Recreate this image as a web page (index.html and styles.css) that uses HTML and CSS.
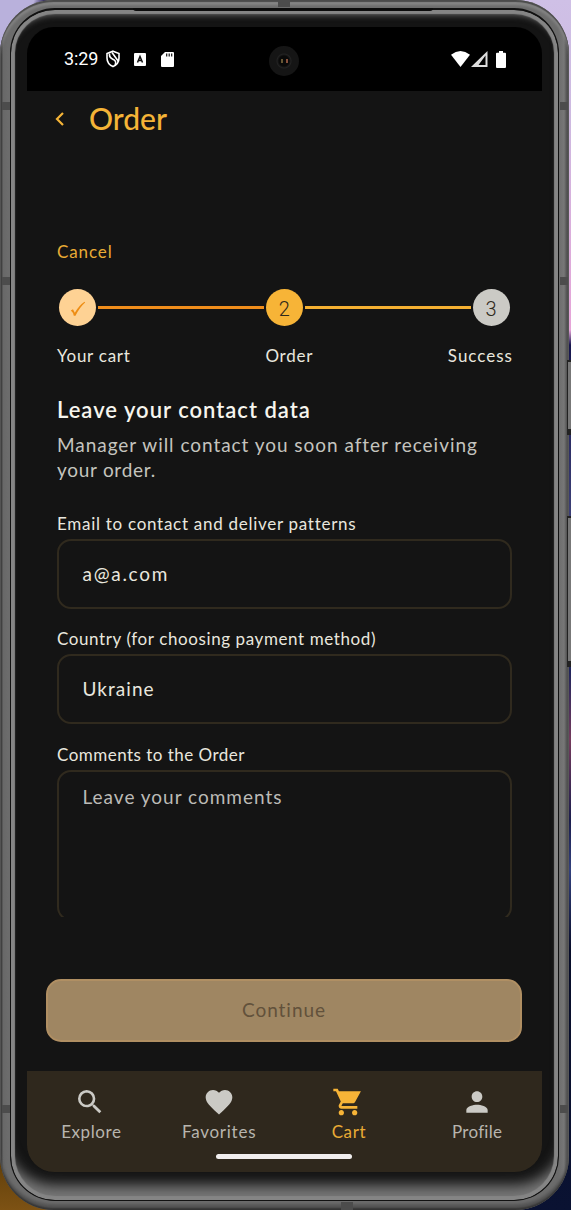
FILE: index.html
```
<!DOCTYPE html>
<html lang="en">
<head>
<meta charset="utf-8">
<title>Order</title>
<link rel="stylesheet" href="styles.css">
</head>
<body>
<div class="phone">
  <div class="bezel">
    <main class="screen">
      <div class="status">
        <span class="time">3:29</span>
        <svg class="s-shield" width="16" height="18" viewBox="0 0 16 18" fill="none" stroke="#fff" stroke-width="1.600"><path d="M8 1.200 14 3.500V8c0 4-2.500 7-6 8.600C4.500 15 2 12 2 8V3.500z"/><path d="M4.500 3.500C4 8 6.500 8.500 8.500 9.500s3 3 1.500 5.500M7 2.500l6.500 9"/></svg>
        <svg class="s-a" width="12" height="13" viewBox="0 0 12 13"><rect width="12" height="13" rx="1" fill="#fff"/><path d="M3.500 9.500 6 3.500l2.500 6M4.500 7.500h3" fill="none" stroke="#111" stroke-width="1.500"/></svg>
        <svg class="s-sd" width="13" height="15" viewBox="0 0 13 15"><path d="M4 0h8q1 0 1 1v13q0 1-1 1H1q-1 0-1-1V4z" fill="#fff"/><path d="M5.700 1.500v3M8.200 1.500v3M10.700 1.500v3" stroke="#111" stroke-width="1.200"/></svg>
        <span class="camera"><i></i><i></i></span>
        <svg class="s-wifi" width="19" height="16" viewBox="0 0 19 16"><path d="M0 3.700Q9.500-3.500 19 3.700L9.500 16z" fill="#fff"/></svg>
        <svg class="s-cell" width="17" height="16" viewBox="0 0 17 16"><path d="M0 16 16.500 0v16zM7.500 14h7V4.500z" fill="#ddd" fill-rule="evenodd"/></svg>
        <svg class="s-bat" width="10" height="17" viewBox="0 0 10 17"><path d="M3 0h4v1.700h2q1 0 1 1V16q0 1-1 1H1q-1 0-1-1V2.700q0-1 1-1h2z" fill="#fff"/></svg>
      </div>
      <header class="header">
        <svg width="10" height="14" viewBox="0 0 10 14" fill="none" stroke="#f5b437" stroke-width="2.200"><path d="M8 1 2 7l6 6"/></svg>
        <h1>Order</h1>
      </header>
      <section class="content">
        <a class="cancel">Cancel</a>
        <div class="steps">
          <span class="dot done"><svg width="16" height="16" viewBox="0 0 16 16"><path d="M.8 9.500 3 8.300l1.800 3.500Q9 4.500 14.500.8l.6.700Q9.500 6.500 5.500 14.800H3.800Q3 11 .8 9.500z" fill="#ee8d14"/></svg></span>
          <span class="line first"></span>
          <span class="dot current">2</span>
          <span class="line"></span>
          <span class="dot next">3</span>
        </div>
        <div class="step-names"><span class="n1">Your cart</span><span class="n2">Order</span><span class="n3">Success</span></div>
        <h2>Leave your contact data</h2>
        <p class="note"><span class="p1">Manager will contact you soon after receiving</span><br><span class="p2">your order.</span></p>
        <label class="l1">Email to contact and deliver patterns</label>
        <div class="field f1">a@a.com</div>
        <label class="l2">Country (for choosing payment method)</label>
        <div class="field f2">Ukraine</div>
        <label class="l3">Comments to the Order</label>
        <div class="field area">Leave your comments</div>
      </section>
      <button class="continue">Continue</button>
      <nav class="nav">
        <div class="tab"><svg viewBox="0 0 24 24"><path d="M15.500 14h-.790l-.280-.270A6.470 6.470 0 0 0 16 9.500 6.500 6.500 0 1 0 9.500 16c1.610 0 3.090-.590 4.230-1.570l.270.280v.790l5 4.990L20.490 19zm-6 0C7.010 14 5 11.990 5 9.500S7.010 5 9.500 5 14 7.010 14 9.500 11.990 14 9.500 14z"/></svg><span class="t1">Explore</span></div>
        <div class="tab"><svg viewBox="0 0 24 24"><path d="M12 21.350l-1.450-1.320C5.400 15.360 2 12.280 2 8.500 2 5.420 4.420 3 7.500 3c1.740 0 3.410.810 4.500 2.090C13.090 3.810 14.760 3 16.500 3 19.580 3 22 5.420 22 8.500c0 3.780-3.400 6.860-8.550 11.540z"/></svg><span class="t2">Favorites</span></div>
        <div class="tab active"><svg viewBox="0 0 24 24"><path d="M7 18c-1.100 0-1.990.900-1.990 2S5.900 22 7 22s2-.900 2-2-.900-2-2-2zM1 2v2h2l3.600 7.590-1.350 2.450c-.160.280-.250.610-.250.960 0 1.100.900 2 2 2h12v-2H7.420c-.140 0-.250-.110-.250-.250l.030-.120.900-1.630h7.450c.750 0 1.410-.410 1.750-1.030L21.700 4H5.210l-.940-2zm16 16c-1.100 0-1.990.900-1.990 2s.890 2 1.990 2 2-.900 2-2-.900-2-2-2z"/></svg><span class="t3">Cart</span></div>
        <div class="tab"><svg viewBox="0 0 24 24"><path d="M12 12c2.210 0 4-1.790 4-4s-1.790-4-4-4-4 1.790-4 4 1.790 4 4 4zm0 2c-2.670 0-8 1.340-8 4v2h16v-2c0-2.660-5.330-4-8-4z"/></svg><span class="t4">Profile</span></div>
        <span class="home"></span>
      </nav>
    </main>
  </div>
  <i class="seam a"></i><i class="seam b"></i><i class="seam c"></i><i class="seam d"></i><i class="seam e"></i><i class="seam f"></i><i class="seam top"></i><i class="seam bottom"></i><i class="speaker"></i>
</div>
<i class="side power"></i><i class="side volume"></i>
</body>
</html>
```
FILE: styles.css
```
* { box-sizing: border-box; }
html { background: #111; }
body {
  margin: 0; width: 571px; height: 1210px; position: relative; overflow: hidden;
  background:
    linear-gradient(#5b3b08, #7d5214) 0 1150px / 250px 60px no-repeat,
    linear-gradient(110deg, #b9b1dc 32px, #16103f 44px) 0 0 / 60px 60px no-repeat,
    linear-gradient(#cfc0e6 0, #cdb9e0 120px, #e6a4d8 330px, #17164e 345px, #3d4077 520px, #20255c 670px, #743a5c 740px, #1b1d4d 820px, #32407d 870px, #080d2a 950px, #0a1232 1210px);
  font-family: Lato, sans-serif; color: #e9e7df;
}
.phone {
  position: relative; width: 568.5px; height: 1210px; padding: 8px 10px 9px 10px;
  border-radius: 54px;
  background: linear-gradient(90deg, #333 0, #333 1.500px, #686868 3px, #6c6c6c 8px, #6c6c6c 558px, #777 564px, #444 568px);
  box-shadow: inset 0 2px 1px #4b4b4b, inset 0 5px 3px #878787, inset 0 -2px 2px #333, inset 0 -6px 3px #555;
}
.bezel {
  height: 1193px; padding: 17px 14px 28px 15px;
  border: solid #111; border-width: 2px 1px 1px 1px; border-radius: 45px;
  background: #141414;
  box-shadow: inset 0 0 1px 4px #858585, inset 0 9px 6px -4px #666, inset 0 -22px 13px -7px #777;
}
.screen {
  width: 515px; height: 1145px; margin-left: 1px; border-radius: 27px; overflow: hidden;
  display: flex; flex-direction: column; background: #141414;
}
.status { height: 64px; background: #000; display: flex; align-items: center; padding: 0 36px 0 37px; flex: none; }
.time { font: 18px/20px Roboto, sans-serif; color: #fff; letter-spacing: -.1px; width: 35px; }
.s-shield { margin-left: 6px; }
.s-a { margin-left: 13px; }
.s-sd { margin-left: 15px; }
.camera { width: 30px; height: 30px; border-radius: 50%; background: radial-gradient(#090909 5px, #222 7px, #151515 8px); margin: 4px 0 0 95px; display: flex; justify-content: center; align-items: center; gap: 3px; }
.camera i { width: 2px; height: 4px; background: #665633; }
.camera i + i { background: #87503b; }
.s-wifi { margin-left: auto; }
.s-cell { margin-left: 1px; }
.s-bat { margin-left: 8px; }
.header { height: 57px; padding: 0 0 2px 28px; display: flex; align-items: center; flex: none; }
h1 { margin: -1px 0 0 24px; font: 500 30px/40px Lato, sans-serif; color: #f5b437; }
.content { height: 769px; overflow: hidden; padding: 92px 30px 0; flex: none; }
.cancel { display: block; color: #e9ab35; font-size: 17px; line-height: 24px; letter-spacing: .9px; }
.steps { display: flex; align-items: center; height: 37px; margin: 24.500px 2.500px 0 2px; }
.dot { width: 37px; height: 37px; border-radius: 50%; display: flex; align-items: center; justify-content: center; font: 300 20px/24px Roboto, sans-serif; color: #30291b; padding-top: 3px; flex: none; }
.done { background: #fed294; }
.current { background: #f7b437; }
.next { background: #cbcac5; }
.line { flex: 1; height: 3px; margin: 0 2px; background: #f5b032; }
.first { background: #f08d1b; }
.step-names { display: flex; justify-content: space-between; margin-top: 18px; font-size: 17px; line-height: 24px; }
.n1, .n2 { letter-spacing: .75px; }
.n3 { letter-spacing: 1px; margin-right: -1px; }
h2 { margin: 28.500px 0 0; font: 600 22px/28px Lato, sans-serif; letter-spacing: 1px; color: #f6f5ee; white-space: nowrap; }
.note { margin: 8px 0 30px; font-size: 19px; line-height: 25px; color: #c5c4bf; white-space: nowrap; }
.p1 { letter-spacing: .96px; }
.p2 { letter-spacing: .72px; }
label { display: block; font-size: 17px; line-height: 24px; white-space: nowrap; }
.l1 { letter-spacing: .72px; }
.l2 { letter-spacing: .6px; }
.l3 { letter-spacing: .48px; }
.field { height: 70px; margin: 3px 0 18.300px -.5px; border: 2px solid #302a1e; border-radius: 14px; padding: 0 24px; font-size: 19px; line-height: 65px; }
.f1 { letter-spacing: 1.700px; }
.f2 { letter-spacing: 1.050px; }
.area { height: 151px; line-height: 50px; color: #bcbbb7; letter-spacing: 1px; }
.continue { flex: none; width: 476px; height: 63px; margin: 62px 0 0 19px; padding: 0 0 2px; border: 2px solid #b08f63; border-radius: 15px; background: #9f8662; color: #62513b; font: 19px/24px Lato, sans-serif; letter-spacing: .95px; }
.nav { position: relative; margin-top: 29px; height: 101px; flex: none; background: #2f281d; display: flex; color: #b8b5ae; }
.tab { flex: 1; padding-top: 15px; display: flex; flex-direction: column; align-items: center; font-size: 17px; line-height: 24px; }
.tab svg { width: 32px; height: 32px; fill: #cbcac5; margin: 0 0 2px -2px; }
.tab.active { color: #e9ab35; }
.tab.active svg { fill: #f7b437; }
.t1, .t3 { letter-spacing: .6px; }
.t2 { letter-spacing: .75px; margin-left: -2px; }
.t4 { letter-spacing: .25px; margin-left: -1px; }
.home { position: absolute; left: 189px; top: 83px; width: 136px; height: 5px; border-radius: 3px; background: #f1eeee; }
.seam { position: absolute; width: 8px; height: 8px; background: #4c4c4c; }
.a { left: 2px; top: 102px; } .b { left: 2px; top: 277px; } .c { left: 2px; top: 1105px; }
.d { right: 1px; top: 102px; } .e { right: 1px; top: 277px; } .f { right: 1px; top: 1105px; }
.top { left: 278px; top: 0; width: 12px; height: 7px; }
.bottom { left: 341px; bottom: 0; width: 12px; height: 8px; }
.speaker { position: absolute; left: 133px; top: 8px; width: 300px; height: 3px; border-radius: 0 0 3px 3px; background: #0c0c0c; }
.side { position: absolute; left: 567px; width: 4px; background: #777; border: solid #222; border-width: 2px 0 6px 1px; }
.power { top: 360px; height: 75px; }
.volume { top: 516px; height: 151px; }
```
